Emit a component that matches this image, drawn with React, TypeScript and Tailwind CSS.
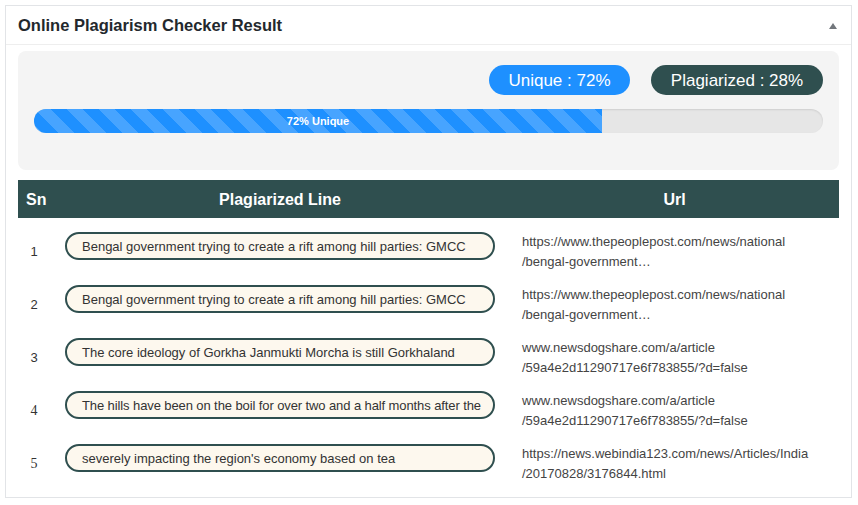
import React from "react";

const rows = [
  {
    sn: "1",
    serif: false,
    tight: false,
    line: "Bengal government trying to create a rift among hill parties: GMCC",
    url1: "https://www.thepeoplepost.com/news/national",
    url2: "/bengal-government…",
  },
  {
    sn: "2",
    serif: false,
    tight: false,
    line: "Bengal government trying to create a rift among hill parties: GMCC",
    url1: "https://www.thepeoplepost.com/news/national",
    url2: "/bengal-government…",
  },
  {
    sn: "3",
    serif: false,
    tight: false,
    line: "The core ideology of Gorkha Janmukti Morcha is still Gorkhaland",
    url1: "www.newsdogshare.com/a/article",
    url2: "/59a4e2d11290717e6f783855/?d=false",
  },
  {
    sn: "4",
    serif: true,
    tight: true,
    line: "The hills have been on the boil for over two and a half months after the",
    url1: "www.newsdogshare.com/a/article",
    url2: "/59a4e2d11290717e6f783855/?d=false",
  },
  {
    sn: "5",
    serif: true,
    tight: false,
    line: "severely impacting the region's economy based on tea",
    url1: "https://news.webindia123.com/news/Articles/India",
    url2: "/20170828/3176844.html",
  },
];

export default function App() {
  return (
    <div className="w-[858px] h-[505px] bg-white pt-[5px] pl-[5px] font-['Liberation_Sans',Arial,sans-serif]">
      <div className="w-[847px] h-[493px] border border-[#e2e4e7] bg-white">
        <div className="h-[39px] border-b border-[#eeeeee] flex items-center justify-between pl-[12px] pr-[14px]">
          <h2 className="font-bold text-[16.5px] text-[#23282d] leading-none">
            Online Plagiarism Checker Result
          </h2>
          <svg width="8" height="6" viewBox="0 0 8 6" className="mt-[1px]">
            <polygon points="0,6 4,0 8,6" fill="#72777c" />
          </svg>
        </div>
        <div className="px-[12px] pt-[6px]">
          <div className="rounded-[8px] bg-[#f4f4f4] h-[119px] px-[16px] pt-[14px]">
            <div className="flex justify-end gap-[21px]">
              <div className="h-[30px] w-[141px] rounded-full bg-[#1e90ff] text-white text-[17px] flex items-center justify-center pt-[1px]">
                Unique : 72%
              </div>
              <div className="h-[30px] w-[172px] rounded-full bg-[#2f4f4f] text-white text-[17px] flex items-center justify-center pt-[1px]">
                Plagiarized : 28%
              </div>
            </div>
            <div className="mt-[14px] h-[24px] rounded-full bg-[#e6e6e6] shadow-[inset_0_1px_2px_rgba(0,0,0,0.1)] overflow-hidden">
              <div className="h-full w-[72%] bg-[#1e90ff] bg-[linear-gradient(45deg,rgba(255,255,255,0.18)_25%,transparent_25%,transparent_50%,rgba(255,255,255,0.18)_50%,rgba(255,255,255,0.18)_75%,transparent_75%,transparent)] bg-[length:32px_32px] flex items-center justify-center text-white font-bold text-[11px]">
                72% Unique
              </div>
            </div>
          </div>
          <div className="mt-[10px] h-[38px] bg-[#2f4f4f] grid grid-cols-[32px_460px_1fr] items-center text-white font-bold text-[16px] pt-[1px]">
            <div className="pl-[8px]">Sn</div>
            <div className="text-center">Plagiarized Line</div>
            <div className="text-center">Url</div>
          </div>
          <div className="pt-[7px]">
            {rows.map((r, i) => (
              <div key={i} className="h-[53px] grid grid-cols-[32px_460px_1fr]">
                <div
                  className={
                    "self-center text-center text-[13px] text-[#333] " +
                    (r.serif ? "font-['Liberation_Serif',serif] text-[14px]" : "")
                  }
                >
                  {r.sn}
                </div>
                <div className="pt-[7px] pl-[15px]">
                  <div
                    className={
                      "h-[28px] w-[430px] border-2 border-[#2f4f4f] rounded-full bg-[#fdf8ee] pl-[15px] pr-[8px] text-[13px] leading-[26px] text-[#333] whitespace-nowrap overflow-hidden " +
                      (r.tight ? "tracking-[-0.1px]" : "")
                    }
                  >
                    {r.line}
                  </div>
                </div>
                <div className="self-center pl-[12px] text-[13px] leading-[20px] text-[#444]">
                  <div>{r.url1}</div>
                  <div>{r.url2}</div>
                </div>
              </div>
            ))}
          </div>
        </div>
      </div>
    </div>
  );
}
